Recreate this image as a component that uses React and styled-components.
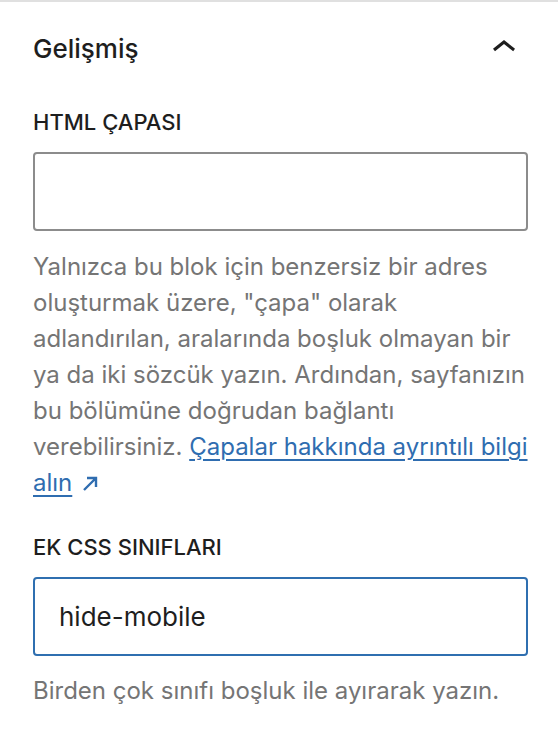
import styled, { createGlobalStyle } from 'styled-components';

const Global = createGlobalStyle`
  body {
    margin: 0;
    background: #fff;
    font-family: Inter, "Noto Sans", sans-serif;
    color: #1e1e1e;
  }
`;

const Panel = styled.section`
  width: 558px;
  height: 744px;
  box-sizing: border-box;
  border-top: 2px solid #e0e0e0;
  padding: 0 30px 0 33px;
  overflow: hidden;
`;

const PanelHeader = styled.div`
  height: 92px;
  display: flex;
  align-items: center;
  justify-content: space-between;
`;

const Title = styled.h2`
  margin: 0;
  font-size: 26px;
  font-weight: 500;
  color: #1e1e1e;
`;

const Toggle = styled.button`
  border: 0;
  background: none;
  padding: 0;
  width: 48px;
  height: 48px;
  display: flex;
  color: #1e1e1e;
`;

const Field = styled.div`
  margin-top: ${(p) => p.$top || 0}px;
`;

const Label = styled.label`
  display: block;
  font-size: 22px;
  font-weight: 500;
  line-height: 32px;
  text-transform: uppercase;
  margin-bottom: 14px;
`;

const Input = styled.input`
  display: block;
  box-sizing: border-box;
  width: 100%;
  height: 79px;
  padding: 0 24px;
  font-family: inherit;
  font-size: 26px;
  color: #1e1e1e;
  border: 2px solid ${(p) => (p.$focus ? '#2f6fb0' : '#8c8c8c')};
  border-radius: 4px;
  outline: none;
  background: #fff;
`;

const Help = styled.p`
  margin: ${(p) => p.$gap || 18}px 0 0;
  font-size: 24px;
  line-height: 36px;
  color: #757575;
`;

const Link = styled.a`
  color: #2f6db0;
  text-decoration: underline;
  text-underline-offset: 4px;
  text-decoration-thickness: 2px;
`;

const External = styled.svg`
  width: 16px;
  height: 16px;
  margin-left: 10px;
  vertical-align: -1px;
  stroke: #2f6db0;
  fill: none;
  stroke-width: 2.4;
`;

function ChevronUp() {
  return (
    <svg viewBox="0 0 24 24" width="48" height="48" fill="currentColor">
      <path d="M6.5 12.4L12 8l5.5 4.4-.9 1.2L12 10l-4.5 3.6-1-1.2z" />
    </svg>
  );
}

export default function App() {
  return (
    <>
      <Global />
      <Panel>
        <PanelHeader>
          <Title>Gelişmiş</Title>
          <Toggle aria-label="Daralt">
            <ChevronUp />
          </Toggle>
        </PanelHeader>

        <Field $top={12}>
          <Label>HTML çapası</Label>
          <Input />
          <Help>
            Yalnızca bu blok için benzersiz bir adres oluşturmak üzere, "çapa" olarak
            adlandırılan, aralarında boşluk olmayan bir ya da iki sözcük yazın. Ardından,
            sayfanızın bu bölümüne doğrudan bağlantı verebilirsiniz.{' '}
            <Link href="#">Çapalar hakkında ayrıntılı bilgi alın</Link>
            <External viewBox="0 0 16 16">
              <path d="M2 14L14 2M5 2h9v9" />
            </External>
          </Help>
        </Field>

        <Field $top={30}>
          <Label>Ek CSS sınıfları</Label>
          <Input $focus defaultValue="hide-mobile" />
          <Help $gap={17}>Birden çok sınıfı boşluk ile ayırarak yazın.</Help>
        </Field>
      </Panel>
    </>
  );
}
